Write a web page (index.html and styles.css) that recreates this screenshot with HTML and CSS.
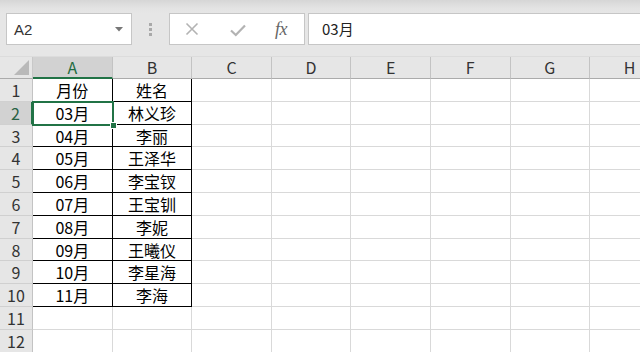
FILE: index.html
```html
<!DOCTYPE html>
<html lang="zh-CN">
<head>
<meta charset="utf-8">
<title>Sheet</title>
<link rel="stylesheet" href="styles.css">
</head>
<body>
<div class="toolbar">
  <div class="namebox">
    <span class="nb-text">A2</span>
    <svg class="nb-arrow" width="8" height="5" viewBox="0 0 8 5"><path d="M0 0 H8 L4 4.5 Z" fill="#777"/></svg>
  </div>
  <div class="sep">
    <span class="dot"></span><span class="dot"></span><span class="dot"></span>
  </div>
  <div class="fxbox">
    <svg class="ico-x" width="14" height="14" viewBox="0 0 14 14"><path d="M1.5 1.5 L12.5 12.5 M12.5 1.5 L1.5 12.5" stroke="#b3b3b3" stroke-width="1.6" fill="none"/></svg>
    <svg class="ico-check" width="16" height="13" viewBox="0 0 16 13"><path d="M1 6.5 L5.8 11 L15 1.5" stroke="#b3b3b3" stroke-width="2.2" fill="none"/></svg>
    <span class="fx">fx</span>
  </div>
  <div class="formula">03月</div>
</div>
<div class="sheet">
  <div class="corner"><svg width="15" height="15" viewBox="0 0 15 15"><path d="M15 0 V15 H0 Z" fill="#b9b9b9"/></svg></div>
  <div class="ch sel-col">A</div>
  <div class="ch">B</div>
  <div class="ch">C</div>
  <div class="ch">D</div>
  <div class="ch">E</div>
  <div class="ch">F</div>
  <div class="ch">G</div>
  <div class="ch">H</div>

  <div class="rh">1</div><div class="c t ta">月份</div><div class="c t tb">姓名</div><div class="c"></div><div class="c"></div><div class="c"></div><div class="c"></div><div class="c"></div><div class="c"></div>
  <div class="rh sel-row">2</div><div class="c t ta active">03月<span class="selbox"></span><span class="handle"></span></div><div class="c t tb">林义珍</div><div class="c"></div><div class="c"></div><div class="c"></div><div class="c"></div><div class="c"></div><div class="c"></div>
  <div class="rh">3</div><div class="c t ta">04月</div><div class="c t tb">李丽</div><div class="c"></div><div class="c"></div><div class="c"></div><div class="c"></div><div class="c"></div><div class="c"></div>
  <div class="rh">4</div><div class="c t ta">05月</div><div class="c t tb">王泽华</div><div class="c"></div><div class="c"></div><div class="c"></div><div class="c"></div><div class="c"></div><div class="c"></div>
  <div class="rh">5</div><div class="c t ta">06月</div><div class="c t tb">李宝钗</div><div class="c"></div><div class="c"></div><div class="c"></div><div class="c"></div><div class="c"></div><div class="c"></div>
  <div class="rh">6</div><div class="c t ta">07月</div><div class="c t tb">王宝钏</div><div class="c"></div><div class="c"></div><div class="c"></div><div class="c"></div><div class="c"></div><div class="c"></div>
  <div class="rh">7</div><div class="c t ta">08月</div><div class="c t tb">李妮</div><div class="c"></div><div class="c"></div><div class="c"></div><div class="c"></div><div class="c"></div><div class="c"></div>
  <div class="rh">8</div><div class="c t ta">09月</div><div class="c t tb">王曦仪</div><div class="c"></div><div class="c"></div><div class="c"></div><div class="c"></div><div class="c"></div><div class="c"></div>
  <div class="rh">9</div><div class="c t ta">10月</div><div class="c t tb">李星海</div><div class="c"></div><div class="c"></div><div class="c"></div><div class="c"></div><div class="c"></div><div class="c"></div>
  <div class="rh">10</div><div class="c t ta">11月</div><div class="c t tb">李海</div><div class="c"></div><div class="c"></div><div class="c"></div><div class="c"></div><div class="c"></div><div class="c"></div>
  <div class="rh">11</div><div class="c"></div><div class="c"></div><div class="c"></div><div class="c"></div><div class="c"></div><div class="c"></div><div class="c"></div><div class="c"></div>
  <div class="rh">12</div><div class="c"></div><div class="c"></div><div class="c"></div><div class="c"></div><div class="c"></div><div class="c"></div><div class="c"></div><div class="c"></div>
</div>
</body>
</html>
```

FILE: styles.css
```css
* { box-sizing: border-box; }
html, body {
  margin: 0;
  padding: 0;
  width: 640px;
  height: 352px;
  overflow: hidden;
  background: #e6e6e6;
  font-family: "Noto Sans CJK SC", "Noto Sans", sans-serif;
}
.toolbar {
  height: 57px;
  padding-top: 13px;
  display: flex;
  align-items: flex-start;
  background: linear-gradient(#d6d6d6 0px, #e3e3e3 8px, #e6e6e6 14px);
  border-bottom: 1px solid #dcdcdc;
}
.namebox {
  margin-left: 6px;
  width: 126px;
  height: 32px;
  background: #fff;
  border: 1px solid #c6c6c6;
  display: flex;
  align-items: center;
  justify-content: space-between;
  padding: 0 8px 0 7px;
}
.nb-text {
  font-family: "Liberation Sans", sans-serif;
  font-size: 15px;
  color: #333;
}
.sep {
  width: 37px;
  height: 32px;
  display: flex;
  flex-direction: column;
  align-items: center;
  justify-content: center;
  gap: 2px;
}
.dot {
  width: 3px;
  height: 3px;
  background: #a9a9a9;
}
.fxbox {
  width: 136px;
  height: 32px;
  background: #fff;
  border: 1px solid #c6c6c6;
  display: flex;
  align-items: center;
  padding-left: 15px;
}
.ico-x { margin-right: 31px; }
.ico-check { margin-right: 29px; margin-top: 2px; }
.fx {
  font-family: "Liberation Serif", serif;
  font-style: italic;
  font-size: 18px;
  color: #666;
  letter-spacing: -0.5px;
}
.formula {
  margin-left: 3px;
  flex: 1;
  height: 32px;
  background: #fff;
  border: 1px solid #c6c6c6;
  border-right: none;
  font-size: 15px;
  line-height: 30px;
  padding-left: 13px;
  color: #222;
}
.sheet {
  display: grid;
  grid-template-columns: 33px repeat(8, 79.6px);
  grid-template-rows: 22px repeat(12, 22.8px);
  background: #fff;
}
.corner {
  background: #e6e6e6;
  border-right: 1px solid #c8c8c8;
  border-bottom: 1px solid #ababab;
  display: flex;
  align-items: flex-end;
  justify-content: flex-end;
  padding: 0 3px 3px 0;
}
.ch {
  background: #e6e6e6;
  border-right: 1px solid #c3c3c3;
  border-bottom: 1px solid #ababab;
  text-align: center;
  font-size: 16px;
  line-height: 21px;
  color: #333;
}
.ch.sel-col {
  background: #d2d2d2;
  border-bottom: 2px solid #217346;
  color: #1e6b41;
}
.rh {
  background: #e6e6e6;
  border-right: 1px solid #c3c3c3;
  border-bottom: 1px solid #d0d0d0;
  text-align: center;
  font-size: 16px;
  line-height: 22px;
  color: #333;
}
.rh.sel-row {
  background: #d2d2d2;
  border-right: 2px solid #217346;
  color: #2a6245;
}
.c {
  border-right: 1px solid #d9d9d9;
  border-bottom: 1px solid #d9d9d9;
}
.t {
  text-align: center;
  font-size: 16px;
  line-height: 22px;
  color: #000;
  border-bottom: 1px solid #000;
}
.ta { border-right: 1px solid #000; }
.tb { border-right: 1px solid #000; }
.active { position: relative; }
.selbox {
  position: absolute;
  left: -1px;
  top: -1px;
  right: -2px;
  bottom: -2px;
  border: 2px solid #217346;
}
.handle {
  position: absolute;
  right: -5px;
  bottom: -5px;
  width: 7px;
  height: 7px;
  background: #217346;
  border: 1px solid #fff;
}
```
